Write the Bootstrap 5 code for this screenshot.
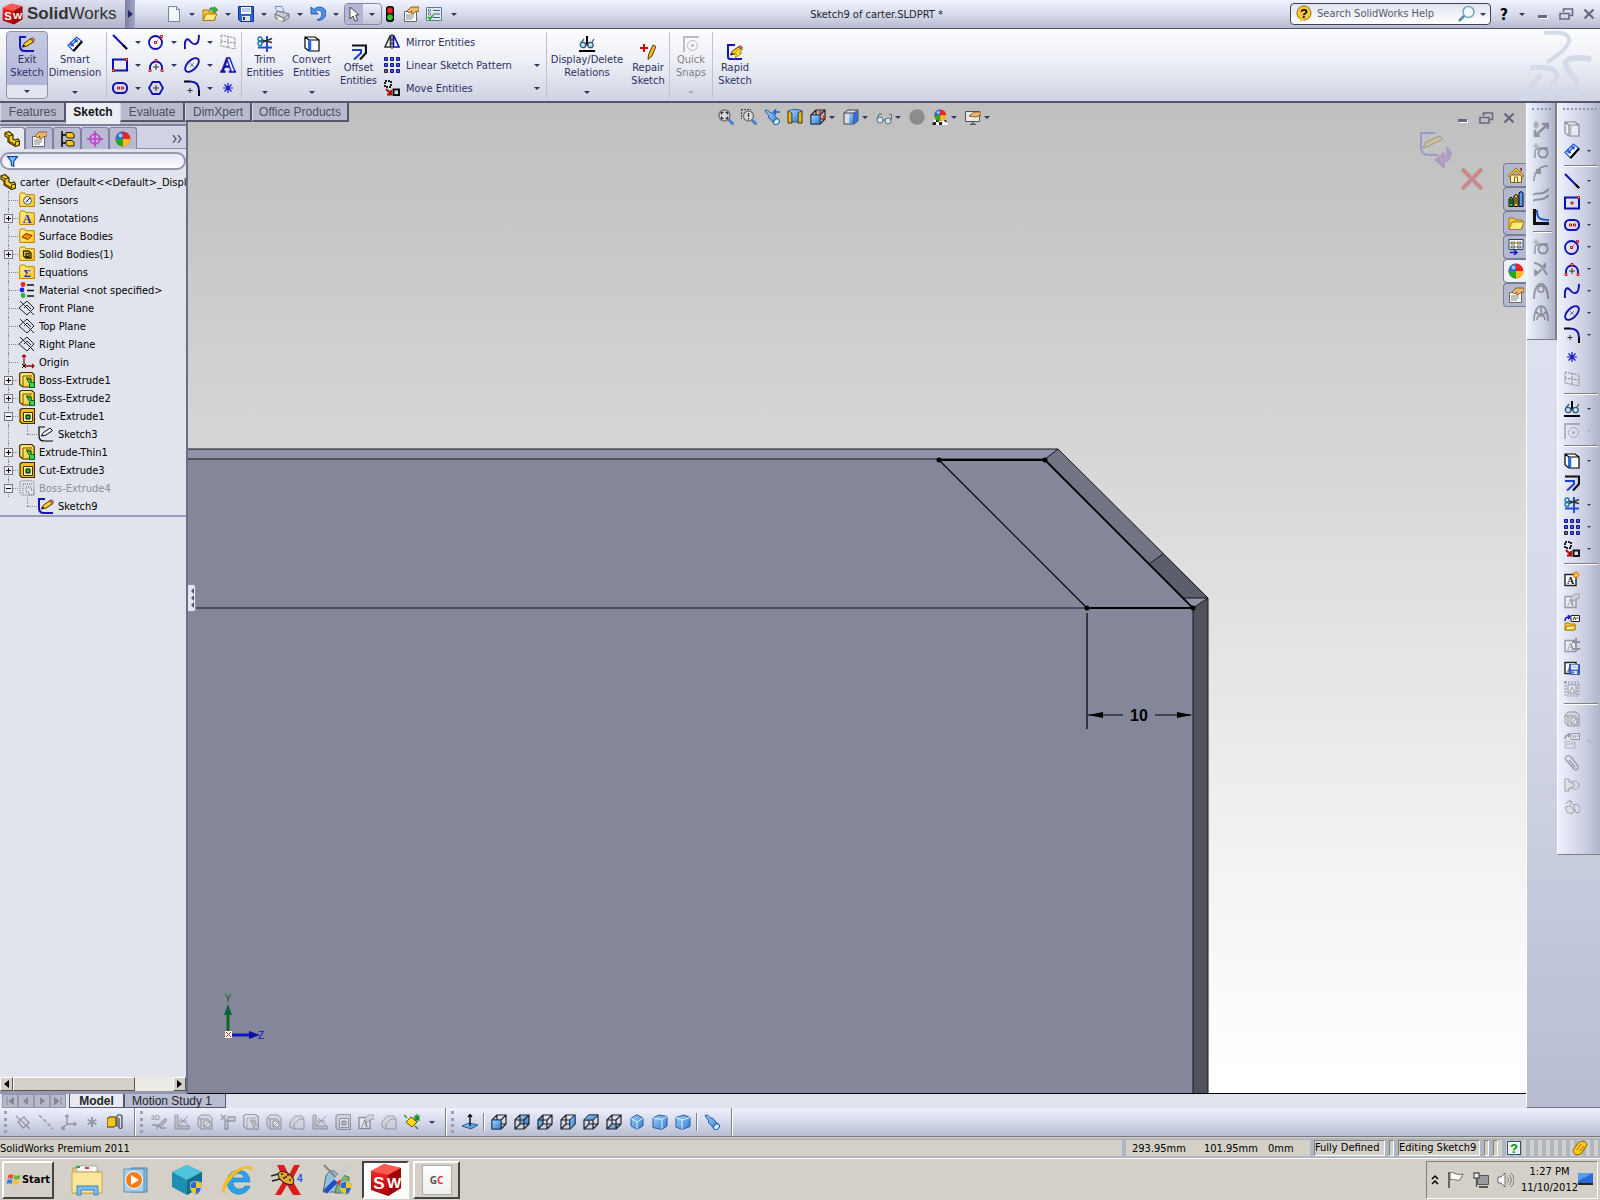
<!DOCTYPE html>
<html lang="en">
<head>
<meta charset="utf-8">
<meta name="viewport" content="width=device-width, initial-scale=1">
<title>SolidWorks - Sketch9 of carter.SLDPRT</title>
<link href="https://cdn.jsdelivr.net/npm/bootstrap@5.3.0/dist/css/bootstrap.min.css" rel="stylesheet">
<style>
:root{--ui:"DejaVu Sans Condensed","DejaVu Sans","Noto Sans",sans-serif;--ar:"Liberation Sans",Arial,sans-serif;--edge:#53566e}
body{font:11px/13px var(--ui);color:#000;background:#d4d0c8;height:100vh;overflow:hidden}
.btn.t{font:inherit;color:inherit;padding:0;border:0;border-radius:0;display:inline-flex;align-items:center;justify-content:center;flex:none;line-height:13px}
svg{display:block;flex:none}
.ic{width:16px;height:16px}
.w18{width:18px;height:20px}.w23{width:23px;height:20px}
.cr{display:block;border:3px solid transparent;border-top-color:#33365c;border-bottom:0;width:0;height:0}
.cr.dim{border-top-color:#aaa}
.off svg{filter:grayscale(1);opacity:.38}
.titlebar{height:29px;background:linear-gradient(#f0f3ff,#d9dcec 50%,#b7bbd0);border-bottom:1px solid var(--edge)}
.logo{width:125px;height:28px;background:linear-gradient(#dcdfee,#b3b6cb);font:17px/28px var(--ar);color:#333;padding-left:2px}
.flyout{width:10px;height:28px;background:linear-gradient(90deg,#797c9e,#a5a8c5)}
.quick{margin-left:30px}
.ptr{border:4px solid transparent;border-left:5px solid #23266a;border-right:0}
.picked{border:1px solid #85889e;border-radius:4px;height:22px;overflow:hidden;margin:0 -1px}
.picked .on{background:#b3b6d3}
.findbox{width:201px;height:22px;border:1px solid #3f4354;border-radius:4px;background:linear-gradient(#e0e4f0,#fff)}
.findbox input,.filterbox input{border:0;background:none;outline:0;min-width:0;font:11px/14px var(--ui);padding:0}
.findbox input::placeholder{color:#555a6c;opacity:1}
.doctitle{color:#1d1f30}
.qm{color:#6d7188;font-size:16px!important}
.ribbon{height:74px;background:linear-gradient(#fcfdff,#edeff6 45%,#d0d3e2);border-bottom:2px solid var(--edge);color:#2c2f66;padding-left:6px}
.btn.big{flex-direction:column;justify-content:flex-start;height:68px;padding-top:5px}
.btn.big span{display:block;text-align:center;white-space:nowrap;margin-top:1px}
.btn.big .cr{margin-top:auto;margin-bottom:5px}
.btn.big.low{padding-top:13px}
.btn.held{background:linear-gradient(#c7cae2,#b2b6d8 80%,#e2e4ee 81%);border:1px solid #8f92ac;border-radius:4px;padding-top:4px}
.vs{width:1px;height:66px;background:#bfc2d0;flex:none}
.gr{height:23px}
.wide-list{width:164px;padding-left:2px}
.wide-list .btn{gap:6px}
.cmdtabs{font:12px/18px var(--ar);height:19px;z-index:2}
.cmdtabs a{color:#4c4e5c;text-decoration:none;background:#b9bbcd;border:1px solid var(--edge);border-width:0 2px 2px 0;height:19px;text-align:center;border-left:1px solid #d6d8e4}
.cmdtabs a.cur{background:#eceef5;color:#111;font-weight:bold;border:0;height:21px}
.side{width:188px;background:#e1e4ed;border-right:2px solid #6b6e86;position:relative}
.sidegap{height:21px;background:#c0c0c4}
.sidetabs{background:#cfd3e4;height:25px;border-top:2px solid #7b7f9b;padding-top:1px;border-bottom:1px solid #8b8fa8;font-size:20px;color:#666a7c}
.sidetabs .btn{width:28px;height:22px;background:#b8bbd3;border:1px solid #7e829e;border-bottom:0;border-radius:3px 3px 0 0}
.sidetabs .btn.cur{background:#e6e9f1;width:25px;border-left:0}
.filterbox{height:18px;border:2px solid #9598a8;border-radius:9px;background:linear-gradient(#e2e5f3,#fff);margin-top:3px}
.tree{list-style:none;margin:3px 0 0;padding:0;border-bottom:2px solid #9a9dbb;white-space:nowrap}
.tree li{height:18px;display:flex;align-items:center;padding-left:19px;position:relative}
.tree li.root{padding-left:0}
.tree .ic{margin-right:4px}
.tree li:not(.root)::before{content:"";position:absolute;left:8px;top:0;bottom:0;border-left:1px dotted #888}
.tree li:not(.root)::after{content:"";position:absolute;left:9px;width:9px;top:9px;border-top:1px dotted #888}
.tree li.kid{padding-left:38px}
.tree li.kid::after{left:27px;width:10px}
.tree li.kid b{position:absolute;left:27px;top:0;height:9px;border-left:1px dotted #888}
.tree li.end::before{display:none}
.ghosted{color:#8c8e98}
.xp{position:absolute;left:4px;top:5px;width:9px;height:9px;border:1px solid #777;background:#eef0f6;z-index:1;padding:0}
.xp::before{content:"";position:absolute;left:1px;right:1px;top:3px;height:1px;background:#000}
.xp.plus::after{content:"";position:absolute;top:1px;bottom:1px;left:3px;width:1px;background:#000}
.hscroll{height:14px;background:#eceae5}
.bev,.btn.t.bev{background:#d4d0c8;border:1px solid;border-color:#fff #555 #555 #fff;height:14px;width:13px}
.bev.thumb{width:122px}
.sidefoot{height:3px;background:#9497b0}
.view{background:linear-gradient(#bfbfbf,#d8d8d8 38%,#ececec 66%,#fff 98%);position:relative;min-width:0;border-bottom:1px solid #000;overflow:hidden}
.model{position:absolute;inset:0;width:100%;height:100%}
.heads{position:absolute;top:4px;left:0;right:6px}
.heads .cw{width:10px;padding-right:4px}
.winbtns{position:absolute;top:5px;right:6px}
.confirm{position:absolute;top:26px;right:42px;opacity:.38}
.btn.t.grab{position:absolute;left:0;top:481px;width:8px;height:28px;background:#e4e6ef;border:1px solid #8d90a6;border-left:0;border-radius:0 3px 3px 0}
.panes{position:absolute;right:-1px;top:60px;width:24px}
.panes .btn{width:24px;height:24px;background:#b4b8cd;border:1px solid #777c98;border-right:0;border-radius:4px 0 0 4px}
.panes .btn.cur{background:#eef0f6}
.dock{width:74px;background:linear-gradient(#e2e6f4,#d5d9ea 55%,#b8bcd2);border-left:1px solid #fff;border-bottom:1px solid #777}
.vbar{background:linear-gradient(90deg,#eef1fd,#c9cde0 65%,#aeb2cb);border:2px solid #808080;border-width:0 2px 1px 0;padding-top:15px;position:relative;flex:none}
.vbar.wide{width:44px;height:752px;border-left:1px solid #fff;border-right:0}
.vbar.thin{width:30px;height:237px}
.vbar::before{content:"";position:absolute;top:5px;left:5px;right:4px;border-top:2px dotted #9195ad}
.vr2{height:22px;display:flex;align-items:center;padding-left:6px}
.vr2 .cw{width:14px;padding-left:4px}
.vr2 .cr{border-width:2px 2px 0}
.hr2{height:2px;margin:3px 3px 3px 6px;background:#808080;border-bottom:1px solid #fff}
.sheets{height:14px;background:#e1e4ed;font:12px/13px var(--ar)}
.sheets .btn{font:12px/12px var(--ar);height:14px;padding:0;border:1px solid #555a70;border-top:0;border-radius:0}
.sheets .nv{width:16px;background:#b7b9ca;border:1px solid #9497ac}
.sheets .first{width:55px;background:#e8eaf2}
.sheets .second{width:102px;background:#b9bbcf;text-align:left;padding-left:7px}
.nvs{width:69px;padding-left:2px}
.hbar{height:29px;background:linear-gradient(#eef1fd,#cfd3e6 60%,#b9bdd2);border-bottom:1px solid #777}
.dots{width:3px;height:22px;border-left:3px dotted #9b9eb4;flex:none}
.s1{width:2px;background:#808080;border-right:1px solid #fff;flex:none}
.s1.short{height:18px;margin:0 2px}
.status{height:20px;border-top:2px solid #b0b6c0;border-bottom:2px solid #b0b6c0;margin-top:1px}
.status span{white-space:nowrap}
.bl{background:#adb7c3}
.cell{border:1px solid;border-color:#808080 #fff #fff #808080;background:#d4d0c8;height:16px;flex:none;width:5px;line-height:14px}
.stripes{background:repeating-linear-gradient(90deg,#d4d0c8 0 4px,#adb7c3 4px 8px);width:102px;padding:0 12px 0 9px}
.task{border-top:1px solid #fff;height:42px;padding:2px}
.btn.t.raised{background:#d4d0c8;border:2px solid;border-color:#fff #444 #444 #fff;width:47px}
.btn.t.raised.start{width:52px}
.btn.t.sunk{background:#fff;border:2px solid;border-color:#444 #fff #fff #444;width:47px}
.task .btn{height:38px}
.task .btn.la{width:34px;margin-left:16px}
.big32{width:32px;height:32px}
.tray{border:1px solid;border-color:#808080 #fff #fff #808080;width:172px;height:38px}
.gc{width:30px;height:30px;background:linear-gradient(#fff,#eee);border:1px solid #aaa;font:bold 10px/28px "Open Sans",sans-serif;color:#555}
.clock{line-height:16px}
</style>
<script src="https://cdn.jsdelivr.net/npm/bootstrap@5.3.0/dist/js/bootstrap.bundle.min.js"></script>
</head>
<body class="d-flex flex-column">
<svg width="0" height="0" class="position-absolute" aria-hidden="true">
<defs>
<linearGradient id="gy" x1="0" y1="0" x2="1" y2="1"><stop offset="0" stop-color="#fff48a"/><stop offset="1" stop-color="#fcc81c"/></linearGradient>
<linearGradient id="gb" x1="0" y1="0" x2="1" y2="1"><stop offset="0" stop-color="#a8d4ff"/><stop offset="1" stop-color="#2f7ad0"/></linearGradient>
<linearGradient id="gr" x1="0" y1="0" x2="0" y2="1"><stop offset="0" stop-color="#f33"/><stop offset="1" stop-color="#a00"/></linearGradient>
<g id="pen"><path d="M3.500 11l2-4L12 2.500l3 3L8 10z" fill="#ffd024" stroke="#4a3000"/><path d="M11.500 3l2-1.500 2.300 2-1.800 2.200z" fill="#d66" stroke="#633" stroke-width=".6"/><path d="M3.500 11l1-2.500 1.800 1.500z" fill="#111"/></g>
<symbol id="new" viewBox="0 0 16 16"><path d="M2.500.5h8l3 3v12h-11z" fill="#f2f7fa" stroke="#6f8a94"/><path d="M10.500.5v3h3" fill="#cfe0e6" stroke="#6f8a94"/></symbol>
<symbol id="open" viewBox="0 0 16 16"><path d="M1 14V4h5l1 2h6v8z" fill="#f6c945" stroke="#a87800"/><path d="M1 14.500L4 8h11l-3 6.500z" fill="#ffe88a" stroke="#a87800"/><path d="M7 4c1-3 4-3 5-1V.5L16 4l-4 3V5c-2-1-3-1-5-1" fill="#3db53d" stroke="#0b6a0b" stroke-width=".5"/></symbol>
<symbol id="save" viewBox="0 0 16 16"><path d="M.5.5h15v15h-13l-2-2z" fill="#2b62cf" stroke="#12318a"/><path d="M3 1h10v7H3z" fill="#fff"/><path d="M4 3h8M4 5h8" stroke="#7a9bd8"/><path d="M4 10h8v5H4z" fill="#dce4f4"/><path d="M5 11h2v3H5z" fill="#12318a"/></symbol>
<symbol id="print" viewBox="0 0 16 16"><path d="M3 6L1 .5h7L10 6z" fill="#d8ebff" stroke="#6a7c96" stroke-width=".8"/><path d="M1 8l3-3 11 3v4l-6 3.500L1 12z" fill="#c9ccd4" stroke="#555a66" stroke-width=".8"/><path d="M1 8l9 4 5-4M10 12v3" fill="none" stroke="#555a66" stroke-width=".8"/><path d="M4 11l5 2v2l-5-1z" fill="#f6f6c8"/></symbol>
<symbol id="undo" viewBox="0 0 16 16"><path d="M1 1v7h7L5.500 5.500C8 3 12 4 12 8c0 3-2 5-5 6 5 1 9-2 9-7 0-6-8-8-12-3.500z" fill="#4d92e6" stroke="#174a9c" stroke-width=".8"/></symbol>
<symbol id="arrow" viewBox="0 0 16 16"><path d="M4 1v12l3-3 2 5 2.500-1-2-5H13z" fill="#fff" stroke="#444"/></symbol>
<symbol id="light" viewBox="0 0 16 16"><rect x="4.500" y=".5" width="7" height="15" rx="2" fill="#222" stroke="#000"/><circle cx="8" cy="4.500" r="2.700" fill="#f22"/><circle cx="8" cy="11.300" r="2.700" fill="#3c3"/></symbol>
<symbol id="props" viewBox="0 0 16 16"><path d="M1.500 5.500h12v10h-12z" fill="#fafafa" stroke="#666"/><path d="M3 9h8M3 11h8M3 13h6" stroke="#888"/><path d="M4 5l4-4 8 0v4l-4 1-2 2-2-1 1-2-3 2z" fill="#eeb56c" stroke="#7a4a10" stroke-width=".8"/></symbol>
<symbol id="opts" viewBox="0 0 16 16"><path d="M.5 1.500h15v13H.5z" fill="#dfeaf2" stroke="#5a7c90"/><path d="M7 4.500h7M7 8h7M7 11.500h7" stroke="#557" stroke-width="1.200"/><path d="M2.500 3.500h2v2h-2zM2.500 7h2v2h-2z" fill="#fff" stroke="#557" stroke-width=".7"/><path d="M2 11l2 2 3-4" stroke="#0a0" fill="none" stroke-width="1.600"/></symbol>
<symbol id="sk" viewBox="0 0 16 16"><path d="M7 1H1v9c0 3 2 5 5 5h9" fill="none" stroke="#1414b8" stroke-width="2"/><use href="#pen"/></symbol>
<symbol id="skb" viewBox="0 0 16 16"><path d="M7 1H1v9c0 3 2 5 5 5h9" fill="none" stroke="#000" stroke-width="1.200"/><path d="M3.500 10l2-3.500L12 2l2.500 2.500L8 9z" fill="#fff" stroke="#000"/></symbol>
<symbol id="dim" viewBox="0 0 16 16"><path d="M1 9.500L9.500 1l5.500 4.500L6.500 15z" fill="#fff" stroke="#1d4fd8" stroke-width="1.200"/><path d="M4 9.500L10 4M4 6.500v3h3M7.500 4H10v2.500" fill="none" stroke="#1d4fd8" stroke-width="1.400"/><path d="M6.500 15L15 5.500" stroke="#000" stroke-width="2.200"/></symbol>
<symbol id="line" viewBox="0 0 16 16"><path d="M1 1l14 14" stroke="#1010b0" stroke-width="2"/><path d="M11 11l4 4" stroke="#000" stroke-width="2"/></symbol>
<symbol id="rect" viewBox="0 0 16 16"><path d="M1 2.500h14v11H1z" fill="none" stroke="#1010b0" stroke-width="2"/><path d="M13.500 1.500h2v2h-2zM.5 12.500h2v2h-2z" fill="#fff" stroke="#c00"/></symbol>
<symbol id="rectc" viewBox="0 0 16 16"><path d="M1 2.500h14v11H1z" fill="none" stroke="#1010b0" stroke-width="2"/><path d="M7 7h2v2H7zM13.500 1.500h2v2h-2z" fill="#fff" stroke="#c00"/></symbol>
<symbol id="slot" viewBox="0 0 16 16"><rect x="1" y="3" width="14" height="10" rx="4.500" fill="none" stroke="#1010b0" stroke-width="2"/><path d="M5.500 7h2v2h-2zM9.500 7h2v2h-2z" fill="#fff" stroke="#c00"/></symbol>
<symbol id="circ" viewBox="0 0 16 16"><circle cx="7.500" cy="8.500" r="6.500" fill="none" stroke="#1010b0" stroke-width="1.800"/><path d="M8 8l5-5" stroke="#800" stroke-dasharray="1 1"/><path d="M6.500 7.500h2v2h-2zM12.500 1.500h2v2h-2z" fill="#fff" stroke="#c00"/></symbol>
<symbol id="arc" viewBox="0 0 16 16"><path d="M2 12C1 2 15 2 14 12" fill="none" stroke="#1010b0" stroke-width="1.800"/><path d="M8 7v6M5 10h6" stroke="#333"/><path d="M7 2.500h2v2H7zM1 12.500h2v2H1zM13 12.500h2v2h-2z" fill="#fff" stroke="#c00"/></symbol>
<symbol id="poly" viewBox="0 0 16 16"><path d="M4.500 2h7L15 8l-3.500 6h-7L1 8z" fill="none" stroke="#1010b0" stroke-width="1.800"/><path d="M8 5v6M5 8h6" stroke="#333"/></symbol>
<symbol id="spl" viewBox="0 0 16 16"><path d="M1 15C0 6 3 3 6 7s9 6 9-6" fill="none" stroke="#1010b0" stroke-width="1.900"/></symbol>
<symbol id="ell" viewBox="0 0 16 16"><ellipse cx="8" cy="8" rx="8.500" ry="4.600" transform="rotate(-45 8 8)" fill="none" stroke="#1010b0" stroke-width="1.800"/><path d="M6 6l4 4M10 6l-4 4" stroke="#555" stroke-dasharray="1 .6"/></symbol>
<symbol id="fil" viewBox="0 0 16 16"><path d="M0 1.500h6" stroke="#000" stroke-width="2"/><path d="M6 1.500c6 0 9 3 9 9" fill="none" stroke="#1010b0" stroke-width="2"/><path d="M15 10v6" stroke="#000" stroke-width="2"/><path d="M6 8v5M3.500 10.500h5" stroke="#333"/></symbol>
<symbol id="txt" viewBox="0 0 16 16"><text x="8" y="15" text-anchor="middle" font-family="Liberation Serif" font-weight="bold" font-size="21" fill="#fff" stroke="#1010b0" stroke-width="1.300">A</text></symbol>
<symbol id="pt" viewBox="0 0 16 16"><path d="M8 3v10M3 8h10M4.500 4.500l7 7M11.500 4.500l-7 7" stroke="#1414c8" stroke-width="1.200"/></symbol>
<symbol id="pl3" viewBox="0 0 16 16"><path d="M1 1l14 3v11l-14-3zM8 2v12M1 7l14 2" fill="none" stroke="#888" stroke-dasharray="2 1"/></symbol>
<symbol id="trim" viewBox="0 0 16 16"><path d="M10 0v16M1 11.500h14" stroke="#1d4fd8" stroke-width="2"/><path d="M5 4l10 2.500M5 6.500l10-4" stroke="#333" stroke-width="1.500"/><circle cx="3" cy="3" r="2" fill="none" stroke="#17a" stroke-width="1.400"/><circle cx="3" cy="7.500" r="2" fill="none" stroke="#17a" stroke-width="1.400"/></symbol>
<symbol id="conv" viewBox="0 0 16 16"><path d="M1 1h10l4 3v11H5l-4-3zM5 4h10M5 4v11M1 1l4 3" fill="#fff" stroke="#000" stroke-width="1.200"/><path d="M6 4v11" stroke="#1c6df0" stroke-width="2.500"/></symbol>
<symbol id="offs" viewBox="0 0 16 16"><path d="M1 1.500h14V9L9 15.500" fill="none" stroke="#111" stroke-width="2.200"/><path d="M1 6h9v3l-7 6.500" fill="none" stroke="#1d3fd0" stroke-width="2"/></symbol>
<symbol id="mir" viewBox="0 0 16 16"><path d="M6.500 1v12H1z" fill="#fff" stroke="#333" stroke-width="1.600"/><path d="M9.500 1v12H15z" fill="#fff" stroke="#1010b0" stroke-width="1.600"/><path d="M8 0v16" stroke="#000" stroke-dasharray="3 1"/></symbol>
<symbol id="pat" viewBox="0 0 16 16"><g fill="#4b5df0" stroke="#101080"><path d="M.5.500h3v3h-3zM6.500.500h3v3h-3zM12.500.500h3v3h-3zM.5 6.500h3v3h-3zM6.500 6.500h3v3h-3zM12.500 6.500h3v3h-3zM6.500 12.500h3v3h-3zM12.500 12.500h3v3h-3z"/><path d="M.5 12.500h3v3h-3z" fill="#777" stroke="#222"/></g></symbol>
<symbol id="move" viewBox="0 0 16 16"><path d="M1 1h6v6H1z" fill="none" stroke="#222" stroke-width="2" stroke-dasharray="2 1"/><path d="M2 9l5 5M7 10v4.500H3" stroke="#a00" fill="none" stroke-width="1.800"/><path d="M9.500 9.500h5.500v5.500H9.500z" fill="#ddd" stroke="#111" stroke-width="2"/></symbol>
<symbol id="rel" viewBox="0 0 16 16"><path d="M8 0v9M0 15h16" stroke="#000" stroke-width="2"/><circle cx="4" cy="9" r="2.700" fill="#bfe4fa" stroke="#3a5a74" stroke-width="1.300"/><circle cx="11.500" cy="9" r="2.700" fill="#bfe4fa" stroke="#3a5a74" stroke-width="1.300"/><path d="M2 7l3-4M13 6l2-3M7 9h2" stroke="#3a5a74" stroke-width="1.300"/></symbol>
<symbol id="rep" viewBox="0 0 16 16"><path d="M4 0v8M0 4h8" stroke="#d00" stroke-width="2"/><path d="M8 15.500l.5-5L13 1l3 1.500-4 9.500z" fill="#f5b820" stroke="#5a3a00"/></symbol>
<symbol id="snap" viewBox="0 0 16 16"><path d="M1 16V1h15" fill="none" stroke="#555" stroke-width="1.800"/><circle cx="9.500" cy="9.500" r="5" fill="none" stroke="#555"/><circle cx="9.500" cy="9.500" r="1.500" fill="#555"/></symbol>
<symbol id="rapid" viewBox="0 0 16 16"><path d="M8 1H1v12c0 1 1 2 2 2h12" fill="none" stroke="#1414b8" stroke-width="2"/><use href="#pen"/><path d="M12 5l-5 5h3l-3 5 8-6h-3l3-4z" fill="#ffe92e" stroke="#a60" stroke-width=".7"/></symbol>
<symbol id="part" viewBox="0 0 16 16"><path d="M1 2l4-1.500L9 4v4l2 1 3-1 1.500 2v4L11.500 15.500 4 11V7L1 5z" fill="#f8cf1e" stroke="#3a2c00" stroke-width="1.200"/><path d="M1 2l4 3 4-1M5 5v5l6.500 4v-3M11.500 11l4-1" fill="none" stroke="#3a2c00"/></symbol>
<symbol id="ftree" viewBox="0 0 16 16"><path d="M3 0v16M3 4h4M3 12h4" stroke="#000" stroke-width="1.500"/><path d="M7 1.500h6l2 1.500v4H9L7 5.500zM7 9.500h6l2 1.500v4H9l-2-1.500z" fill="#f2c81c" stroke="#2a2000"/></symbol>
<symbol id="target" viewBox="0 0 16 16"><circle cx="8" cy="8" r="5" fill="none" stroke="#c63ad0" stroke-width="1.600"/><path d="M8 0v16M0 8h16" stroke="#c63ad0" stroke-width="1.600"/></symbol>
<symbol id="ball" viewBox="0 0 16 16"><circle cx="8" cy="8" r="7.500" fill="#e22"/><path d="M8 .5A7.500 7.500 0 0 0 .5 8L8 8z" fill="#2a6ae0"/><path d="M.5 8A7.500 7.500 0 0 0 8 15.500L8 8z" fill="#2a2"/><path d="M8 15.500A7.500 7.500 0 0 0 15.500 8L8 8z" fill="#fb2"/><circle cx="5.500" cy="4.500" r="2" fill="#fff" opacity=".6"/></symbol>
<symbol id="funnel" viewBox="0 0 16 16"><path d="M2 2h12L9.500 8v6l-3-1.500V8z" fill="#7cc4ff" stroke="#0b4aa8" stroke-width="1.500"/></symbol>
<symbol id="fold" viewBox="0 0 16 16"><path d="M.7 14.500V2.500l1-1.500h4l1 1.700h8.600v11.800z" fill="url(#gy)" stroke="#c08000"/></symbol>
<symbol id="f1" viewBox="0 0 16 16"><use href="#fold"/><circle cx="8.500" cy="8.500" r="4" fill="#eef" stroke="#555"/><path d="M7 10l4-4" stroke="#000"/></symbol>
<symbol id="f2" viewBox="0 0 16 16"><use href="#fold"/><text x="8" y="13" text-anchor="middle" font-family="Liberation Serif" font-weight="bold" font-size="12" fill="#1030d0">A</text></symbol>
<symbol id="f3" viewBox="0 0 16 16"><use href="#fold"/><path d="M3 9l4-3.500 6 2-4 4z" fill="#f80" stroke="#630"/></symbol>
<symbol id="f4" viewBox="0 0 16 16"><use href="#fold"/><path d="M4.500 5h5l2.500 2v5H7L4.500 10zM7 7.500h3v3H7z" fill="none" stroke="#332600" stroke-width="1.300"/></symbol>
<symbol id="f5" viewBox="0 0 16 16"><use href="#fold"/><text x="8" y="13" text-anchor="middle" font-family="Liberation Serif" font-weight="bold" font-size="11" fill="#1030d0">Σ</text></symbol>
<symbol id="mat" viewBox="0 0 16 16"><circle cx="4" cy="2.500" r="2.400" fill="#e22"/><circle cx="3" cy="8" r="2.400" fill="#22d"/><circle cx="4" cy="13.500" r="2.400" fill="#2b3"/><path d="M8 3h7M8 8.500h7M8 14h7" stroke="#111" stroke-width="1.600"/></symbol>
<symbol id="plane" viewBox="0 0 16 16"><path d="M0 8l8-7 7 7-7 7zM1 1l14 14M5 8l3-3 4 4" fill="none" stroke="#222"/></symbol>
<symbol id="orig" viewBox="0 0 16 16"><path d="M5 11V1M3 3l2-2 2 2M6 12h9M13 10l2 2-2 2" fill="none" stroke="#a01010" stroke-width="1.300"/><path d="M3 10l4 4M7 10l-4 4" stroke="#000"/></symbol>
<symbol id="boss" viewBox="0 0 16 16"><path d="M.7 1.500l2-1h10l2.500 2v12.500H4l-3.300-2.500z" fill="url(#gy)" stroke="#3a2c00" stroke-width="1.200"/><path d="M4 4h9M4 4v10M7 6h5v6" stroke="#6a5000" fill="none"/><path d="M7.500 6.500l4.500 1v3h3.500v5h-5v-4z" fill="#3fd04f" stroke="#052"/></symbol>
<symbol id="cut" viewBox="0 0 16 16"><path d="M1 2l2-1.500h12.500v15H3l-2-2z" fill="#f9bc14" stroke="#3a2c00" stroke-width="1.200"/><path d="M4.500 4.500h9v9h-9z" fill="#fff3a0" stroke="#3a2c00"/><path d="M7 7h4v4H7z" fill="#2b3" stroke="#000"/></symbol>
<symbol id="ghost" viewBox="0 0 16 16"><path d="M1 2l2-1.500h9l3 2v12.500H4l-3-2zM4 4h9M4 4v10M7 7h5v3h3v5h-5v-3H7z" fill="none" stroke="#888" stroke-dasharray="1 1" stroke-width="1.300"/></symbol>
<symbol id="zoomf" viewBox="0 0 16 16"><path d="M10 10l5.500 5.500" stroke="#4a80c8" stroke-width="3"/><circle cx="6.500" cy="6.500" r="5.500" fill="#dadde2" stroke="#777" stroke-width="1.500"/><path d="M3.500 5.500v-2h2M7.500 3.500h2v2M9.500 7.500v2h-2M5.500 9.500h-2v-2" fill="none" stroke="#333" stroke-width="1.400"/></symbol>
<symbol id="zooma" viewBox="0 0 16 16"><path d="M0 .5h10M.5 0v10" stroke="#444" stroke-dasharray="2 1"/><path d="M10 10l5.500 5.500" stroke="#4a80c8" stroke-width="3"/><circle cx="7.500" cy="7" r="5" fill="#dadde2" stroke="#777" stroke-width="1.500"/><path d="M7.500 4v4M7.500 9v1.500" stroke="#333" stroke-width="1.400"/></symbol>
<symbol id="scope" viewBox="0 0 16 16"><path d="M1 1.500L3.500 1l3 3 2 0 6.500 7.500-4 4-6.500-7V6.500z" fill="url(#gb)" stroke="#1a5a9c"/><ellipse cx="12.500" cy="12.800" rx="3.200" ry="2.400" transform="rotate(-45 12.500 12.800)" fill="#d4f0ff" stroke="#1a5a9c"/></symbol>
<symbol id="prev" viewBox="0 0 16 16"><use href="#scope"/><path d="M16 3h-6M12 .5L9.500 3 12 5.500" stroke="#1d5fd8" fill="none" stroke-width="1.500"/></symbol>
<symbol id="sect" viewBox="0 0 16 16"><path d="M1 2h4v12H1zM11 2h4v12h-4z" fill="#e6b820" stroke="#443300"/><path d="M1 2c3-2 11-2 14 0l-4 2v9H5V4z" fill="url(#gb)" stroke="#1a4a8c" stroke-width=".8"/></symbol>
<g id="wire" fill="none" stroke="#222" stroke-width="1.200"><path d="M1 6h9v9H1zM6 1h9v9H6zM1 6l5-5M10 6l5-5M1 15l5-5M10 15l5-5"/></g>
<symbol id="c1" viewBox="0 0 16 16"><use href="#wire"/><path d="M1 6h9v9H1z" fill="url(#gb)" stroke="#246"/></symbol>
<symbol id="c2" viewBox="0 0 16 16"><path d="M6 1h9v9H6z" fill="url(#gb)"/><use href="#wire"/></symbol>
<symbol id="c3" viewBox="0 0 16 16"><path d="M1 6l5-5v9l-5 5z" fill="url(#gb)"/><use href="#wire"/></symbol>
<symbol id="c4" viewBox="0 0 16 16"><use href="#wire"/><path d="M10 6l5-5v9l-5 5z" fill="url(#gb)" stroke="#246"/></symbol>
<symbol id="c5" viewBox="0 0 16 16"><use href="#wire"/><path d="M1 6l5-5h9l-5 5z" fill="url(#gb)" stroke="#246"/></symbol>
<symbol id="c6" viewBox="0 0 16 16"><path d="M1 15l5-5h9l-5 5z" fill="url(#gb)"/><use href="#wire"/></symbol>
<symbol id="c7" viewBox="0 0 16 16"><path d="M8 .7l6 3.500v7.600l-6 3.500-6-3.500V4.200z" fill="url(#gb)" stroke="#235a9c"/><path d="M2 4.200l6 3.600 6-3.600M8 7.800v7.500" fill="none" stroke="#dff" stroke-width=".9"/></symbol>
<symbol id="c8" viewBox="0 0 16 16"><path d="M1 4l6-3 8 1.500v9.500l-5 3.500-9-2z" fill="url(#gb)" stroke="#235a9c"/><path d="M1 4l9 1.500 5-3M10 5.500v10" fill="none" stroke="#dff" stroke-width=".9"/></symbol>
<symbol id="c9" viewBox="0 0 16 16"><path d="M1 3.500l8-2.500 6 2.500v9L7 15.500 1 13z" fill="url(#gb)" stroke="#235a9c"/><path d="M1 3.500L7 6l8-2.500M7 6v9.500" fill="none" stroke="#dff" stroke-width=".9"/></symbol>
<symbol id="co" viewBox="0 0 16 16"><use href="#c1"/><path d="M10 1v4M8 3h4M12 8h4M14 6v4" stroke="#d22"/></symbol>
<symbol id="c10" viewBox="0 0 16 16"><path d="M1 4l4-3h10v11l-4 3H1z" fill="#d9dce4" stroke="#444"/><path d="M6 4h5v11H6z" fill="url(#gb)"/><path d="M1 4h10v11M11 4l4-3" fill="none" stroke="#444"/><path d="M11 4l4-3v11l-4 3z" fill="#3a6ad8"/></symbol>
<symbol id="glas" viewBox="0 0 16 16"><circle cx="4" cy="11" r="3" fill="#cfe6f4" stroke="#566b7c"/><circle cx="12" cy="12" r="3" fill="#cfe6f4" stroke="#566b7c"/><path d="M7 11h2M1 10l2-5 3 0M15 11l1-5-3-1" stroke="#566b7c" fill="none"/></symbol>
<symbol id="grey" viewBox="0 0 16 16"><circle cx="8" cy="8" r="7.700" fill="#8c8c8c"/></symbol>
<symbol id="scene" viewBox="0 0 16 16"><path d="M0 16l2-5h12l2 5z" fill="#fff"/><path d="M1 13h3v3H0zM7 13h3v3H7zM12 11h2l1 2h-2zM4 11h3v2H4z" fill="#222"/><g transform="translate(2 0) scale(.78)"><use href="#ball" width="16" height="16"/></g></symbol>
<symbol id="mon" viewBox="0 0 16 16"><path d="M.5 2.500h14v10H.5z" fill="#e8e8ea" stroke="#555"/><path d="M5 15.500h6M8 13v2" stroke="#555" stroke-width="1.500"/><path d="M4 7l5-4h7v3l-5 2z" fill="#eeb56c" stroke="#7a4a10" stroke-width=".8"/></symbol>
<symbol id="home" viewBox="0 0 16 16"><path d="M2.500 8h11v7.500h-11z" fill="#fff0b0" stroke="#8a6010"/><path d="M0 9l8-8 8 8-1.500 1L8 4l-6.500 6z" fill="#f2c030" stroke="#8a6010" stroke-width=".8"/><path d="M12 1h2v4l-2-2z" fill="#b33"/><path d="M6.500 10h3v5.500h-3z" fill="#fff" stroke="#8a6010"/></symbol>
<symbol id="books" viewBox="0 0 16 16"><path d="M1 8l2-2 2 2v7.500H1z" fill="#3b4" stroke="#000"/><path d="M6 5l2-1.500L10 5v10.500H6z" fill="#fc3" stroke="#000"/><path d="M11 2l2-1.500L15 2v13.500h-4z" fill="#59f" stroke="#000"/><path d="M3 8v5M8 6v7" stroke="#000"/></symbol>
<symbol id="fopen" viewBox="0 0 16 16"><path d="M1 14V3h5l1 2h7v9z" fill="#f6c945" stroke="#a87800"/><path d="M1 14.500L4 7h12l-3 7.500z" fill="#ffe88a" stroke="#a87800"/></symbol>
<symbol id="pal" viewBox="0 0 16 16"><path d="M1 .5h14v10H1z" fill="#fff" stroke="#246"/><path d="M3 3h4v2H3zM9 3h4v2H9zM3 7h4v2H3zM9 7h4v2H9z" fill="#fc3" stroke="#246" stroke-width=".7"/><path d="M2 13.500h6M6 11l3 2.500L6 16" stroke="#11c" fill="none" stroke-width="1.500"/></symbol>
<symbol id="blk" viewBox="0 0 16 16"><path d="M1 3.500h11v11H1z" fill="#fff" stroke="#222" stroke-width="1.400"/><text x="6.500" y="12.500" text-anchor="middle" font-family="Liberation Serif" font-weight="bold" font-size="10" fill="#222">A</text></symbol>
<symbol id="b1" viewBox="0 0 16 16"><use href="#blk"/><path d="M12 0v8M8 4h8M9.500 1.500l5 5M14.500 1.500l-5 5" stroke="#f07000" stroke-width="1.200"/><circle cx="12" cy="4" r="1.700" fill="#fd3"/></symbol>
<symbol id="b2" viewBox="0 0 16 16"><use href="#blk"/><path d="M7 4l4-3h5v4l-4 1-3 3z" fill="#bbb" stroke="#444"/></symbol>
<symbol id="b3" viewBox="0 0 16 16"><path d="M1 6c0-3 2-4 4-4M4 0l2 2-2 2" fill="none" stroke="#11c" stroke-width="1.500"/><path d="M7 .5h8.500v6H7z" fill="#fff" stroke="#222"/><path d="M9 5l1.500-3L12 5M12.500 3h2" stroke="#222" fill="none"/><path d="M1 15V8h4l1 1h5v6z" fill="#f6c945" stroke="#a87800"/><path d="M1 15l2-4h9l-2 4z" fill="#ffe88a" stroke="#a87800"/></symbol>
<symbol id="b4" viewBox="0 0 16 16"><use href="#blk"/><path d="M12 1v9M8 5h8M9 12h7" stroke="#222" stroke-width="2"/></symbol>
<symbol id="b5" viewBox="0 0 16 16"><use href="#blk"/><g transform="translate(5 5) scale(.68)"><use href="#save" width="16" height="16"/></g></symbol>
<symbol id="b6" viewBox="0 0 16 16"><rect x="1.500" y="1.500" width="13" height="13" fill="none" stroke="#222" stroke-width="3" stroke-dasharray="1 2"/><path d="M4 4h8v8H4z" fill="#fff" stroke="#222"/><path d="M5.500 11L8 6l2.500 5" fill="none" stroke="#222"/></symbol>
<symbol id="cube" viewBox="0 0 16 16"><path d="M1 4l3-3h8l3 3v11H4l-3-3z" fill="#ccc" stroke="#222"/><path d="M1 4l3 1h8M4 5v10" fill="none" stroke="#222"/><path d="M7 7h6v6H7zM7 13l6-6" fill="#fff" stroke="#222"/></symbol>
<symbol id="clip" viewBox="0 0 16 16"><path d="M4 7l6 7c2 2 5 0 4-3L7 2C4-1 0 2 2 5l8 9M5 5l6 7" fill="none" stroke="#333" stroke-width="1.300"/></symbol>
<symbol id="hook" viewBox="0 0 16 16"><path d="M1 2h4v3h3c3-2 7 0 7 3s-4 6-7 3H5v3H1zM7 6c4-1 4 5 0 4" fill="#ddd" stroke="#333"/></symbol>
<symbol id="gears" viewBox="0 0 16 16"><path d="M2 5c1-3 4-3 6-2M5 1l3 2-2 3M1 8l5-1 4 4-2 4-5-2zM9 6l4-1 3 3v5l-4 1z" fill="#ddd" stroke="#333"/></symbol>
<symbol id="per" viewBox="0 0 16 16"><path d="M1 2l14 13M3 8l6-5 5 6-6 5z" fill="none" stroke="#333" stroke-width="1.300"/></symbol>
<symbol id="axis" viewBox="0 0 16 16"><path d="M1 1l14 14" stroke="#333" stroke-width="1.500" stroke-dasharray="4 2"/></symbol>
<symbol id="csys" viewBox="0 0 16 16"><path d="M6 10V1M4 3l2-2 2 2M6 10h9M13 8l2 2-2 2M6 10l-5 5M1 12v3h3" fill="none" stroke="#333" stroke-width="1.500"/></symbol>
<symbol id="ast" viewBox="0 0 16 16"><path d="M8 3v10M3.500 5.500l9 5M12.500 5.500l-9 5" stroke="#333" stroke-width="2"/></symbol>
<symbol id="mate" viewBox="0 0 16 16"><path d="M0 5l2-2h7v8l-2 2H0z" fill="#f5c518" stroke="#4a3500"/><path d="M10 13V3c0-3 5-3 5 0v10c0 2-3 2-3 0V4" fill="none" stroke="#444" stroke-width="1.200"/></symbol>
<symbol id="td" viewBox="0 0 16 16"><text x="0" y="6" font-family="Liberation Sans" font-weight="bold" font-size="7" fill="#333">3D</text><path d="M1 11h5v4M7 12l7-7 2 1-7 7zM9 14h6" fill="none" stroke="#333" stroke-width="1.300"/></symbol>
<symbol id="corner" viewBox="0 0 16 16"><path d="M1 1h3v11h12v3H1z" fill="#999" stroke="#333"/><path d="M5 11l9-9M6 4l8 7M5 7h8" stroke="#333" fill="none"/></symbol>
<symbol id="xt" viewBox="0 0 16 16"><path d="M1 1l5 5M6 1L1 6" stroke="#333" stroke-width="1.600"/><path d="M5 7h10V3H8v12H5z" fill="#bbb" stroke="#333" stroke-width="1.300"/></symbol>
<symbol id="chm" viewBox="0 0 16 16"><path d="M1 8l5-6h7l2 3v10H5l-4-2z" fill="#ccc" stroke="#333"/><path d="M5 15v-5l5-5h5" fill="none" stroke="#333"/></symbol>
<symbol id="diam" viewBox="0 0 16 16"><path d="M2 8l5-5 6 5-5 5z" fill="#ffd818" stroke="#6a5000"/><path d="M0 1l3 3M11 12l3 3M13 0v8M9 4h7M10.500 1.500l5 5M15.500 1.500l-5 5" stroke="#0a8a1a" stroke-width="1.200"/></symbol>
<symbol id="norm" viewBox="0 0 16 16"><path d="M0 12l7-3 9 2-7 4z" fill="url(#gb)" stroke="#235a9c"/><path d="M8 12V1M6 3l2-2.500L10 3" fill="none" stroke="#000" stroke-width="1.300"/></symbol>
<symbol id="v1" viewBox="0 0 16 16"><path d="M3 0v8M0 4h6M1 1l4 6M5 1L1 7" stroke="#333"/><path d="M3 14L14 4M2 9v6h5M9 3h6v5" fill="none" stroke="#222" stroke-width="2.500"/></symbol>
<symbol id="v2" viewBox="0 0 16 16"><path d="M3 0v6M0 3h6" stroke="#333"/><circle cx="10" cy="10" r="4.500" fill="none" stroke="#222" stroke-width="2"/><path d="M2 15V9c0-3 3-4 6-4h7" fill="none" stroke="#222" stroke-width="1.500"/></symbol>
<symbol id="v3" viewBox="0 0 16 16"><path d="M1 16C1 7 6 1 15 1" fill="none" stroke="#222" stroke-width="1.600"/><path d="M3 4h5v5H3z" fill="#222"/></symbol>
<symbol id="v4" viewBox="0 0 16 16"><path d="M0 8c5-4 8 2 16-6M0 14c5-4 8 2 16-6" fill="none" stroke="#222" stroke-width="2"/></symbol>
<symbol id="v5" viewBox="0 0 16 16"><path d="M1.500 0v14.500H16" fill="none" stroke="#111" stroke-width="3"/><path d="M4 1c0 8 2 10 12 10" fill="none" stroke="#1d4fd8" stroke-width="2"/></symbol>
<symbol id="v6" viewBox="0 0 16 16"><path d="M1 2c6 0 9 5 13 12M2 15c3-5 6-3 6-7" fill="none" stroke="#222" stroke-width="2"/><path d="M9 5l4-4v7zM1 8l5 3-5 3z" fill="#222"/></symbol>
<symbol id="v7" viewBox="0 0 16 16"><path d="M1 16C1-4 15-4 15 16" fill="none" stroke="#222" stroke-width="2"/><circle cx="8" cy="6" r="3" fill="none" stroke="#222" stroke-width="1.500"/></symbol>
<symbol id="v8" viewBox="0 0 16 16"><path d="M1 16C1-4 15-4 15 16M8 1v9M4 15c0-6 8-6 8 0M3 7l5 4 5-4" fill="none" stroke="#222" stroke-width="1.700"/></symbol>
<symbol id="win-" viewBox="0 0 16 16"><path d="M4 10h9v3H4z" fill="#fff"/><path d="M3 9h9v3H3z" fill="#656982"/></symbol>
<symbol id="winr" viewBox="0 0 16 16"><path d="M5.500 6V3h9v6.500h-3" fill="none" stroke="#656982" stroke-width="1.600"/><path d="M2 7.500h9V13H2z" fill="none" stroke="#656982" stroke-width="1.600"/></symbol>
<symbol id="winx" viewBox="0 0 16 16"><path d="M3.500 3.500l9 9M12.500 3.500l-9 9" stroke="#656982" stroke-width="2.200"/></symbol>
<symbol id="sw" viewBox="0 0 32 32"><path d="M14 0l17 4v20L18 32 1 26V7z" fill="url(#gr)"/><path d="M14 0l17 4-13 7L1 7z" fill="#ff5a50"/><path d="M18 11l13-7v20l-13 8z" fill="#9c0808"/><text x="9" y="25" text-anchor="middle" font-family="Liberation Sans" font-weight="bold" font-size="17" fill="#fff">S</text><text x="24" y="24" text-anchor="middle" font-family="Liberation Sans" font-weight="bold" font-size="15" fill="#fff">W</text></symbol>
<symbol id="shield" viewBox="0 0 12 14"><path d="M6 0l6 2c0 6-2 10-6 12C2 12 0 8 0 2z" fill="#2a6ad0" stroke="#eee" stroke-width=".7"/><path d="M6 .5l5.500 2V7H6zM6 7v6.500C3 12 1 10 .6 7z" fill="#fcc722"/></symbol>
</defs>
</svg>

<header class="titlebar d-flex align-items-center">
  <div class="logo d-flex align-items-center gap-1"><svg width="21" height="22" viewBox="0 0 32 32"><use href="#sw"/></svg><span><b>Solid</b>Works</span></div>
  <button class="btn t flyout" aria-label="Show menu"><i class="ptr"></i></button>
  <div class="quick d-flex align-items-center">
    <button class="btn t w18" aria-label="New"><svg class="ic"><use href="#new"/></svg></button><button class="btn t w18" aria-label="New options"><i class="cr"></i></button>
    <button class="btn t w18" aria-label="Open"><svg class="ic"><use href="#open"/></svg></button><button class="btn t w18" aria-label="Open options"><i class="cr"></i></button>
    <button class="btn t w18" aria-label="Save"><svg class="ic"><use href="#save"/></svg></button><button class="btn t w18" aria-label="Save options"><i class="cr"></i></button>
    <button class="btn t w18" aria-label="Print"><svg class="ic"><use href="#print"/></svg></button><button class="btn t w18" aria-label="Print options"><i class="cr"></i></button>
    <button class="btn t w18" aria-label="Undo"><svg class="ic"><use href="#undo"/></svg></button><button class="btn t w18" aria-label="Undo options"><i class="cr"></i></button>
    <div class="picked d-flex"><button class="btn t w18 on" aria-label="Select"><svg class="ic"><use href="#arrow"/></svg></button><button class="btn t w18" aria-label="Select options"><i class="cr"></i></button></div>
    <button class="btn t w18" aria-label="Rebuild"><svg class="ic"><use href="#light"/></svg></button>
    <button class="btn t w23" aria-label="File properties"><svg class="ic"><use href="#props"/></svg></button>
    <button class="btn t w23" aria-label="Options"><svg class="ic"><use href="#opts"/></svg></button><button class="btn t w18" aria-label="More options"><i class="cr"></i></button>
  </div>
  <div class="flex-fill text-center doctitle">Sketch9 of carter.SLDPRT *</div>
  <label class="findbox d-flex align-items-center px-1 gap-1">
    <svg width="18" height="18" viewBox="0 0 18 18"><circle cx="9" cy="8" r="7" fill="#fbc93a" stroke="#9a6a00"/><path d="M5 13v4l4-3z" fill="#fbc93a"/><text x="9" y="12.500" text-anchor="middle" font-family="Liberation Sans" font-weight="bold" font-size="13">?</text></svg>
    <input class="flex-fill" type="search" placeholder="Search SolidWorks Help" aria-label="Search SolidWorks Help">
    <svg width="18" height="18" viewBox="0 0 18 18"><path d="M1 16l6-6" stroke="#5b8cab" stroke-width="2.500"/><circle cx="10.500" cy="7" r="5.500" fill="#f2f8fc" stroke="#7fa4bc" stroke-width="1.500"/></svg><i class="cr"></i>
  </label>
  <button class="btn t ms-1 fw-bold w18 qm" aria-label="Help">?</button><button class="btn t w18" aria-label="Help options"><i class="cr"></i></button>
  <button class="btn t w23" aria-label="Minimize"><svg class="ic"><use href="#win-"/></svg></button>
  <button class="btn t w23" aria-label="Restore"><svg class="ic"><use href="#winr"/></svg></button>
  <button class="btn t w23" aria-label="Close"><svg class="ic"><use href="#winx"/></svg></button>
</header>

<nav class="ribbon d-flex align-items-center">
  <button class="btn t big held" style="width:42px"><svg class="ic"><use href="#sk"/></svg><span>Exit<br>Sketch</span><i class="cr"></i></button>
  <button class="btn t big" style="width:54px"><svg class="ic"><use href="#dim"/></svg><span>Smart<br>Dimension</span><i class="cr"></i></button>
  <div class="vs mx-1"></div>
  <div>
    <div class="gr d-flex align-items-center"><button class="btn t w18" aria-label="Line"><svg class="ic"><use href="#line"/></svg></button><button class="btn t w18" aria-label="Line options"><i class="cr"></i></button><button class="btn t w18" aria-label="Circle"><svg class="ic"><use href="#circ"/></svg></button><button class="btn t w18" aria-label="Circle options"><i class="cr"></i></button><button class="btn t w18" aria-label="Spline"><svg class="ic"><use href="#spl"/></svg></button><button class="btn t w18" aria-label="Spline options"><i class="cr"></i></button><button class="btn t w18" aria-label="Plane"><svg class="ic"><use href="#pl3"/></svg></button></div>
    <div class="gr d-flex align-items-center"><button class="btn t w18" aria-label="Rectangle"><svg class="ic"><use href="#rect"/></svg></button><button class="btn t w18" aria-label="Rectangle options"><i class="cr"></i></button><button class="btn t w18" aria-label="Arc"><svg class="ic"><use href="#arc"/></svg></button><button class="btn t w18" aria-label="Arc options"><i class="cr"></i></button><button class="btn t w18" aria-label="Ellipse"><svg class="ic"><use href="#ell"/></svg></button><button class="btn t w18" aria-label="Ellipse options"><i class="cr"></i></button><button class="btn t w18" aria-label="Text"><svg class="ic"><use href="#txt"/></svg></button></div>
    <div class="gr d-flex align-items-center"><button class="btn t w18" aria-label="Slot"><svg class="ic"><use href="#slot"/></svg></button><button class="btn t w18" aria-label="Slot options"><i class="cr"></i></button><button class="btn t w18" aria-label="Polygon"><svg class="ic"><use href="#poly"/></svg></button><span class="w18"></span><button class="btn t w18" aria-label="Fillet"><svg class="ic"><use href="#fil"/></svg></button><button class="btn t w18" aria-label="Fillet options"><i class="cr"></i></button><button class="btn t w18" aria-label="Point"><svg class="ic"><use href="#pt"/></svg></button></div>
  </div>
  <div class="vs ms-1"></div>
  <button class="btn t big" style="width:46px"><svg class="ic"><use href="#trim"/></svg><span>Trim<br>Entities</span><i class="cr"></i></button>
  <button class="btn t big" style="width:47px"><svg class="ic"><use href="#conv"/></svg><span>Convert<br>Entities</span><i class="cr"></i></button>
  <button class="btn t big low" style="width:47px"><svg class="ic"><use href="#offs"/></svg><span>Offset<br>Entities</span></button>
  <div class="wide-list">
    <div class="gr d-flex align-items-center"><button class="btn t"><svg class="ic"><use href="#mir"/></svg>Mirror Entities</button></div>
    <div class="gr d-flex align-items-center justify-content-between"><button class="btn t"><svg class="ic"><use href="#pat"/></svg>Linear Sketch Pattern</button><button class="btn t w18" aria-label="Pattern options"><i class="cr"></i></button></div>
    <div class="gr d-flex align-items-center justify-content-between"><button class="btn t"><svg class="ic"><use href="#move"/></svg>Move Entities</button><button class="btn t w18" aria-label="Move options"><i class="cr"></i></button></div>
  </div>
  <div class="vs"></div>
  <button class="btn t big" style="width:80px"><svg class="ic"><use href="#rel"/></svg><span>Display/Delete<br>Relations</span><i class="cr"></i></button>
  <button class="btn t big low" style="width:42px"><svg class="ic"><use href="#rep"/></svg><span>Repair<br>Sketch</span></button>
  <div class="vs"></div>
  <button class="btn t big off" style="width:42px"><svg class="ic"><use href="#snap"/></svg><span class="text-black-50">Quick<br>Snaps</span><i class="cr dim"></i></button>
  <div class="vs"></div>
  <button class="btn t big low" style="width:44px"><svg class="ic"><use href="#rapid"/></svg><span>Rapid<br>Sketch</span></button>
  <svg class="ms-auto me-2" width="72" height="70" viewBox="0 0 72 70" fill="none" stroke="#d3dbea" stroke-width="4"><path d="M24 3c32-3 34 10 3 29"/><path d="M10 38c34-4 32 12 14 23-6 4-14 6-22 8l19-25" stroke-width="5"/><path d="M71 29c-28-4-30 3-20 15 10 12 10 19-14 19" stroke-width="6"/></svg>
</nav>

<main class="flex-fill d-flex" style="min-height:0">
  <div class="flex-fill d-flex flex-column" style="min-width:0">
    <div class="flex-fill d-flex position-relative" style="min-height:0">
      <aside class="side d-flex flex-column flex-shrink-0">
        <div class="sidegap"></div>
        <div class="sidetabs d-flex align-items-start">
          <button class="btn t cur" aria-label="Feature tree"><svg class="ic"><use href="#part"/></svg></button><button class="btn t" aria-label="Properties"><svg class="ic"><use href="#props"/></svg></button><button class="btn t" aria-label="Configurations"><svg class="ic"><use href="#ftree"/></svg></button><button class="btn t" aria-label="DimXpert"><svg class="ic"><use href="#target"/></svg></button><button class="btn t" aria-label="Display"><svg class="ic"><use href="#ball"/></svg></button>
          <svg class="ms-auto me-1 mt-2" width="10" height="8"><path d="M1 0l3 4-3 4M6 0l3 4-3 4" fill="none" stroke="#555a70" stroke-width="1.300"/></svg>
        </div>
        <label class="filterbox d-flex align-items-center ps-1"><svg width="13" height="13"><use href="#funnel"/></svg><input class="flex-fill" aria-label="Filter"></label>
        <ul class="tree overflow-hidden">
          <li class="root"><svg class="ic"><use href="#part"/></svg>carter&nbsp; (Default&lt;&lt;Default&gt;_Display</li>
          <li><svg class="ic"><use href="#f1"/></svg>Sensors</li>
          <li><button class="xp plus" aria-label="Expand"></button><svg class="ic"><use href="#f2"/></svg>Annotations</li>
          <li><svg class="ic"><use href="#f3"/></svg>Surface Bodies</li>
          <li><button class="xp plus" aria-label="Expand"></button><svg class="ic"><use href="#f4"/></svg>Solid Bodies(1)</li>
          <li><svg class="ic"><use href="#f5"/></svg>Equations</li>
          <li><svg class="ic"><use href="#mat"/></svg>Material &lt;not specified&gt;</li>
          <li><svg class="ic"><use href="#plane"/></svg>Front Plane</li>
          <li><svg class="ic"><use href="#plane"/></svg>Top Plane</li>
          <li><svg class="ic"><use href="#plane"/></svg>Right Plane</li>
          <li><svg class="ic"><use href="#orig"/></svg>Origin</li>
          <li><button class="xp plus" aria-label="Expand"></button><svg class="ic"><use href="#boss"/></svg>Boss-Extrude1</li>
          <li><button class="xp plus" aria-label="Expand"></button><svg class="ic"><use href="#boss"/></svg>Boss-Extrude2</li>
          <li><button class="xp" aria-label="Collapse"></button><svg class="ic"><use href="#cut"/></svg>Cut-Extrude1</li>
          <li class="kid"><b></b><svg class="ic"><use href="#skb"/></svg>Sketch3</li>
          <li><button class="xp plus" aria-label="Expand"></button><svg class="ic"><use href="#boss"/></svg>Extrude-Thin1</li>
          <li><button class="xp plus" aria-label="Expand"></button><svg class="ic"><use href="#cut"/></svg>Cut-Extrude3</li>
          <li class="ghosted"><button class="xp" aria-label="Collapse"></button><svg class="ic"><use href="#ghost"/></svg>Boss-Extrude4</li>
          <li class="kid end"><b></b><svg class="ic"><use href="#sk"/></svg>Sketch9</li>
        </ul>
        <div class="hscroll d-flex mt-auto"><button class="btn t bev" aria-label="Scroll left"><svg width="5" height="8"><path d="M5 0v8L0 4z"/></svg></button><div class="bev thumb"></div><button class="btn t bev ms-auto" aria-label="Scroll right"><svg width="5" height="8"><path d="M0 0v8l5-4z"/></svg></button></div>
        <div class="sidefoot"></div>
      </aside>
      <div class="cmdtabs d-flex position-absolute top-0 start-0">
        <a href="#" style="width:66px">Features</a><a href="#" class="cur" style="width:54px">Sketch</a><a href="#" style="width:65px">Evaluate</a><a href="#" style="width:67px">DimXpert</a><a href="#" style="width:97px">Office Products</a>
      </div>
      <section class="view flex-fill">
        <svg class="model" viewBox="0 0 1338 990" preserveAspectRatio="xMinYMin slice">
          <path d="M0 346H870L1020 495V991H0z" fill="#848799"/>
          <path d="M0 346H870L857 356H0z" fill="#9093a9"/>
          <path d="M870 346L1020 495l-15 10L857 356z" fill="#717482"/>
          <path d="M975 451l-14 10 44 44 15-10z" fill="#5c5f6b"/>
          <path d="M996 495h24l-15 10z" fill="#8f93a6"/>
          <path d="M1005 505l15-10V991h-15z" fill="#4f515c"/>
          <path d="M0 346H870L1020 495V991M0 356H857M870 346l-13 10M975 451l-14 10M996 495h24l-15 10V991M0 505H1005" fill="none" stroke="#15161b"/>
          <path d="M751 357l148 148M899 510v116M900 612h35M967 612h36" fill="none" stroke="#000" stroke-width="1.200"/>
          <path d="M751 357h106l148 148H899" fill="none" stroke="#000" stroke-width="1.800"/>
          <path d="M900 612l15-3v6zM1004 612l-15-3v6z"/>
          <g><circle cx="751" cy="357" r="2.500"/><circle cx="857" cy="357" r="2.500"/><circle cx="899" cy="505" r="2.500"/><circle cx="1005" cy="505" r="2.500"/></g>
          <text x="951" y="618" text-anchor="middle" font-family="Liberation Sans" font-weight="bold" font-size="16">10</text>
          <path d="M40 932v-24" stroke="#0a6a1a" stroke-width="3"/><path d="M40 901l-4 11h8z" fill="#063"/>
          <path d="M42 932h20" stroke="#1414c8" stroke-width="3"/><path d="M72 932l-11-4v8z" fill="#1010a0"/>
          <path d="M37 928h7v7h-7z" fill="#fff"/><path d="M38 929l5 5M43 929l-5 5" stroke="#c22"/>
          <text x="40" y="899" text-anchor="middle" font-family="Liberation Sans" font-size="10" fill="#0a6a1a">Y</text>
          <text x="70" y="936" font-family="Liberation Sans" font-size="10" fill="#1414c8">Z</text>
        </svg>
        <button class="btn t grab" aria-label="Collapse panel"><svg width="6" height="24"><path d="M5 2v6L2 5zM5 9v6l-3-3zM5 16v6l-3-3z" fill="#556"/></svg></button>
        <div class="heads d-flex justify-content-center">
          <button class="btn t w23" aria-label="Zoom to fit"><svg class="ic"><use href="#zoomf"/></svg></button><button class="btn t w23" aria-label="Zoom to area"><svg class="ic"><use href="#zooma"/></svg></button><button class="btn t w23" aria-label="Previous view"><svg class="ic"><use href="#prev"/></svg></button><button class="btn t w23" aria-label="Section view"><svg class="ic"><use href="#sect"/></svg></button><button class="btn t w23" aria-label="View orientation"><svg class="ic"><use href="#co"/></svg></button><button class="btn t cw" aria-label="Orientation options"><i class="cr"></i></button><button class="btn t w23" aria-label="Display style"><svg class="ic"><use href="#c10"/></svg></button><button class="btn t cw" aria-label="Style options"><i class="cr"></i></button><button class="btn t w23" aria-label="Hide items"><svg class="ic"><use href="#glas"/></svg></button><button class="btn t cw" aria-label="Hide options"><i class="cr"></i></button><button class="btn t w23" aria-label="Edit appearance"><svg class="ic"><use href="#grey"/></svg></button><button class="btn t w23" aria-label="Apply scene"><svg class="ic"><use href="#scene"/></svg></button><button class="btn t cw" aria-label="Scene options"><i class="cr"></i></button><button class="btn t w23" aria-label="View settings"><svg class="ic"><use href="#mon"/></svg></button><button class="btn t cw" aria-label="Settings options"><i class="cr"></i></button>
        </div>
        <div class="winbtns d-flex"><button class="btn t w23" aria-label="Minimize document"><svg class="ic"><use href="#win-"/></svg></button><button class="btn t w23" aria-label="Restore document"><svg class="ic"><use href="#winr"/></svg></button><button class="btn t w23" aria-label="Close document"><svg class="ic"><use href="#winx"/></svg></button></div>
        <svg class="confirm" width="66" height="62" viewBox="0 0 66 62"><path d="M17 4H3v15c0 4 3 7 7 7h10" fill="none" stroke="#5560d8" stroke-width="2"/><path d="M5 19l3-6 14-6 3 3-14 7z" fill="#e6c050" stroke="#555"/><path d="M28 18c8 3 6 14-2 15v6l-9-8 9-8v5c3-1 4-5 2-10z" fill="#9a6ac0" stroke="#7a4aa0"/><path d="M44 40l20 20M64 40L44 60" stroke="#d03030" stroke-width="4"/></svg>
        <div class="panes d-flex flex-column"><button class="btn t" aria-label="Resources"><svg class="ic"><use href="#home"/></svg></button><button class="btn t" aria-label="Design library"><svg class="ic"><use href="#books"/></svg></button><button class="btn t" aria-label="File explorer"><svg class="ic"><use href="#fopen"/></svg></button><button class="btn t" aria-label="View palette"><svg class="ic"><use href="#pal"/></svg></button><button class="btn t cur" aria-label="Appearances"><svg class="ic"><use href="#ball"/></svg></button><button class="btn t" aria-label="Custom properties"><svg class="ic"><use href="#props"/></svg></button></div>
      </section>
    </div>
    <div class="sheets d-flex">
      <span class="nvs d-flex"><button class="btn t nv" aria-label="First"><svg width="8" height="8"><path d="M1 0v8M8 0v8L3 4z" fill="#82859d" stroke="#82859d"/></svg></button><button class="btn t nv" aria-label="Previous"><svg width="8" height="8"><path d="M6 0v8L1 4z" fill="#82859d"/></svg></button><button class="btn t nv" aria-label="Next"><svg width="8" height="8"><path d="M2 0v8l5-4z" fill="#82859d"/></svg></button><button class="btn t nv" aria-label="Last"><svg width="8" height="8"><path d="M7 0v8M0 0v8l5-4z" fill="#82859d" stroke="#82859d"/></svg></button></span>
      <button class="btn fw-bold first">Model</button><button class="btn second">Motion Study 1</button>
    </div>
  </div>
  <div class="dock d-flex align-items-start">
    <div class="vbar thin">
      <div class="vr2 off"><button class="btn t" aria-label="Fit spline"><svg class="ic"><use href="#v1"/></svg></button></div>
      <div class="vr2 off"><button class="btn t" aria-label="Tangent"><svg class="ic"><use href="#v2"/></svg></button></div>
      <div class="vr2 off"><button class="btn t" aria-label="Curve handle"><svg class="ic"><use href="#v3"/></svg></button></div>
      <div class="vr2 off"><button class="btn t" aria-label="Simplify"><svg class="ic"><use href="#v4"/></svg></button></div>
      <div class="vr2"><button class="btn t" aria-label="Fit"><svg class="ic"><use href="#v5"/></svg></button></div>
      <div class="hr2"></div>
      <div class="vr2 off"><button class="btn t" aria-label="Add tangency"><svg class="ic"><use href="#v2"/></svg></button></div>
      <div class="vr2 off"><button class="btn t" aria-label="Curvature"><svg class="ic"><use href="#v6"/></svg></button></div>
      <div class="vr2 off"><button class="btn t" aria-label="Minimum radius"><svg class="ic"><use href="#v7"/></svg></button></div>
      <div class="vr2 off"><button class="btn t" aria-label="Curvature combs"><svg class="ic"><use href="#v8"/></svg></button></div>
    </div>
    <div class="vbar wide">
      <div class="vr2 off"><button class="btn t" aria-label="3D plane"><svg class="ic"><use href="#conv"/></svg></button></div>
      <div class="vr2"><button class="btn t" aria-label="Dimension"><svg class="ic"><use href="#dim"/></svg></button><button class="btn t cw" aria-label="Dimension options"><i class="cr"></i></button></div>
      <div class="hr2"></div>
      <div class="vr2"><button class="btn t" aria-label="Line"><svg class="ic"><use href="#line"/></svg></button><button class="btn t cw" aria-label="Options"><i class="cr"></i></button></div>
      <div class="vr2"><button class="btn t" aria-label="Rectangle"><svg class="ic"><use href="#rectc"/></svg></button><button class="btn t cw" aria-label="Options"><i class="cr"></i></button></div>
      <div class="vr2"><button class="btn t" aria-label="Slot"><svg class="ic"><use href="#slot"/></svg></button><button class="btn t cw" aria-label="Options"><i class="cr"></i></button></div>
      <div class="vr2"><button class="btn t" aria-label="Circle"><svg class="ic"><use href="#circ"/></svg></button><button class="btn t cw" aria-label="Options"><i class="cr"></i></button></div>
      <div class="vr2"><button class="btn t" aria-label="Arc"><svg class="ic"><use href="#arc"/></svg></button><button class="btn t cw" aria-label="Options"><i class="cr"></i></button></div>
      <div class="vr2"><button class="btn t" aria-label="Spline"><svg class="ic"><use href="#spl"/></svg></button><button class="btn t cw" aria-label="Options"><i class="cr"></i></button></div>
      <div class="vr2"><button class="btn t" aria-label="Ellipse"><svg class="ic"><use href="#ell"/></svg></button><button class="btn t cw" aria-label="Options"><i class="cr"></i></button></div>
      <div class="vr2"><button class="btn t" aria-label="Fillet"><svg class="ic"><use href="#fil"/></svg></button><button class="btn t cw" aria-label="Options"><i class="cr"></i></button></div>
      <div class="vr2"><button class="btn t" aria-label="Point"><svg class="ic"><use href="#pt"/></svg></button></div>
      <div class="vr2"><button class="btn t" aria-label="Plane"><svg class="ic"><use href="#pl3"/></svg></button></div>
      <div class="hr2"></div>
      <div class="vr2"><button class="btn t" aria-label="Relations"><svg class="ic"><use href="#rel"/></svg></button><button class="btn t cw" aria-label="Options"><i class="cr"></i></button></div>
      <div class="vr2 off"><button class="btn t" aria-label="Snaps"><svg class="ic"><use href="#snap"/></svg></button><button class="btn t cw" aria-label="Options"><i class="cr dim"></i></button></div>
      <div class="hr2"></div>
      <div class="vr2"><button class="btn t" aria-label="Convert"><svg class="ic"><use href="#conv"/></svg></button><button class="btn t cw" aria-label="Options"><i class="cr"></i></button></div>
      <div class="vr2"><button class="btn t" aria-label="Offset"><svg class="ic"><use href="#offs"/></svg></button></div>
      <div class="vr2"><button class="btn t" aria-label="Trim"><svg class="ic"><use href="#trim"/></svg></button><button class="btn t cw" aria-label="Options"><i class="cr"></i></button></div>
      <div class="vr2"><button class="btn t" aria-label="Pattern"><svg class="ic"><use href="#pat"/></svg></button><button class="btn t cw" aria-label="Options"><i class="cr"></i></button></div>
      <div class="vr2"><button class="btn t" aria-label="Move"><svg class="ic"><use href="#move"/></svg></button><button class="btn t cw" aria-label="Options"><i class="cr"></i></button></div>
      <div class="hr2"></div>
      <div class="vr2"><button class="btn t" aria-label="Make block"><svg class="ic"><use href="#b1"/></svg></button></div>
      <div class="vr2 off"><button class="btn t" aria-label="Edit block"><svg class="ic"><use href="#b2"/></svg></button></div>
      <div class="vr2"><button class="btn t" aria-label="Insert block"><svg class="ic"><use href="#b3"/></svg></button></div>
      <div class="vr2 off"><button class="btn t" aria-label="Add to block"><svg class="ic"><use href="#b4"/></svg></button></div>
      <div class="vr2"><button class="btn t" aria-label="Save block"><svg class="ic"><use href="#b5"/></svg></button></div>
      <div class="vr2 off"><button class="btn t" aria-label="Explode block"><svg class="ic"><use href="#b6"/></svg></button></div>
      <div class="hr2"></div>
      <div class="vr2 off"><button class="btn t" aria-label="New part"><svg class="ic"><use href="#cube"/></svg></button></div>
      <div class="vr2 off"><button class="btn t" aria-label="Insert component"><svg class="ic"><use href="#b3"/></svg></button><button class="btn t cw" aria-label="Options"><i class="cr dim"></i></button></div>
      <div class="vr2 off"><button class="btn t" aria-label="Mate"><svg class="ic"><use href="#clip"/></svg></button></div>
      <div class="vr2 off"><button class="btn t" aria-label="Smart component"><svg class="ic"><use href="#hook"/></svg></button></div>
      <div class="vr2 off"><button class="btn t" aria-label="Rotate component"><svg class="ic"><use href="#gears"/></svg></button></div>
    </div>
  </div>
</main>

<div class="hbar d-flex align-items-center flex-shrink-0">
  <span class="dots mx-1"></span>
  <div class="d-flex off"><button class="btn t w23" aria-label="Plane"><svg class="ic"><use href="#per"/></svg></button><button class="btn t w23" aria-label="Axis"><svg class="ic"><use href="#axis"/></svg></button><button class="btn t w23" aria-label="Coordinate system"><svg class="ic"><use href="#csys"/></svg></button><button class="btn t w23" aria-label="Point"><svg class="ic"><use href="#ast"/></svg></button></div>
  <button class="btn t w23" aria-label="Mate reference"><svg class="ic"><use href="#mate"/></svg></button>
  <span class="s1 align-self-stretch ms-2 me-1"></span><span class="dots me-1"></span>
  <div class="d-flex off"><button class="btn t w23" aria-label="3D sketch"><svg class="ic"><use href="#td"/></svg></button><button class="btn t w23" aria-label="Weldment"><svg class="ic"><use href="#corner"/></svg></button><button class="btn t w23" aria-label="Structural member"><svg class="ic"><use href="#cube"/></svg></button><button class="btn t w23" aria-label="Trim"><svg class="ic"><use href="#xt"/></svg></button><button class="btn t w23" aria-label="Extrude"><svg class="ic"><use href="#boss"/></svg></button><button class="btn t w23" aria-label="End cap"><svg class="ic"><use href="#cube"/></svg></button><button class="btn t w23" aria-label="Chamfer"><svg class="ic"><use href="#chm"/></svg></button><button class="btn t w23" aria-label="Gusset"><svg class="ic"><use href="#corner"/></svg></button><button class="btn t w23" aria-label="Cut"><svg class="ic"><use href="#cut"/></svg></button><button class="btn t w23" aria-label="Hole wizard"><svg class="ic"><use href="#b2"/></svg></button><button class="btn t w23" aria-label="Bead"><svg class="ic"><use href="#chm"/></svg></button></div>
  <button class="btn t w23" aria-label="Reference geometry"><svg class="ic"><use href="#diam"/></svg></button><button class="btn t w18" aria-label="Geometry options"><i class="cr"></i></button>
  <span class="s1 align-self-stretch mx-1"></span><span class="dots me-1"></span>
  <button class="btn t w23" aria-label="Normal to"><svg class="ic"><use href="#norm"/></svg></button>
  <span class="s1 short"></span>
  <button class="btn t w23" aria-label="Front"><svg class="ic"><use href="#c1"/></svg></button><button class="btn t w23" aria-label="Back"><svg class="ic"><use href="#c2"/></svg></button><button class="btn t w23" aria-label="Left"><svg class="ic"><use href="#c3"/></svg></button><button class="btn t w23" aria-label="Right"><svg class="ic"><use href="#c4"/></svg></button><button class="btn t w23" aria-label="Top"><svg class="ic"><use href="#c5"/></svg></button><button class="btn t w23" aria-label="Bottom"><svg class="ic"><use href="#c6"/></svg></button><button class="btn t w23" aria-label="Isometric"><svg class="ic"><use href="#c7"/></svg></button><button class="btn t w23" aria-label="Trimetric"><svg class="ic"><use href="#c8"/></svg></button><button class="btn t w23" aria-label="Dimetric"><svg class="ic"><use href="#c9"/></svg></button>
  <span class="s1 short"></span>
  <button class="btn t w23" aria-label="View orientation"><svg class="ic"><use href="#scope"/></svg></button>
  <span class="s1 align-self-stretch ms-2"></span>
</div>

<footer class="status d-flex align-items-center flex-shrink-0">
  <span class="flex-fill">SolidWorks Premium 2011</span>
  <span class="bl align-self-stretch" style="width:4px"></span>
  <span style="width:78px;padding-left:6px">293.95mm</span><span style="width:64px">101.95mm</span><span style="width:42px">0mm</span>
  <div class="bl d-flex align-items-center align-self-stretch gap-1 ps-1">
    <span class="cell" style="width:71px">Fully Defined</span><span class="cell"></span><span class="cell" style="width:82px">Editing Sketch9</span><span class="cell"></span><span class="cell"></span>
  </div>
  <div class="stripes d-flex align-items-center align-self-stretch justify-content-between">
    <svg width="14" height="14"><rect x=".5" y=".5" width="13" height="13" fill="#e8f4f8" stroke="#357"/><text x="7" y="12" text-anchor="middle" font-family="Liberation Sans" font-weight="bold" font-size="13" fill="#090">?</text></svg>
    <svg width="16" height="16"><path d="M1 10l6-8c4-2 8 0 8 3l-6 9c-4 2-8 0-8-4z" fill="#ffc81e" stroke="#8a5a00"/><path d="M5 10l4-6M8 11l4-5" stroke="#a56a00"/></svg>
  </div>
</footer>

<div class="task d-flex align-items-center flex-shrink-0">
  <button class="btn t raised start fw-bold"><svg width="16" height="14" viewBox="0 0 15 14"><path d="M2 2c2-1 3-1 5 0L6 6C4 5 3 5 1 6z" fill="#e8502a"/><path d="M8 2c2 1 4 1 6 0l-1 4c-2 1-4 1-6 0z" fill="#6db33f"/><path d="M1 7c2-1 3-1 5 0l-1 4c-2-1-3-1-5 0z" fill="#3a7ad8"/><path d="M7 7c2 1 4 1 6 0l-1 4c-2 1-4 1-6 0z" fill="#f6c12c"/></svg>Start</button>
  <button class="btn t la" aria-label="Explorer"><svg class="big32" viewBox="0 0 32 32"><path d="M2 4h10l2 3h14v22H2z" fill="#f0d27a" stroke="#b8923a"/><path d="M6 2h20v6H6z" fill="#fff" stroke="#aaa"/><path d="M5 3h4" stroke="#3a3" stroke-width="2"/><path d="M14 4h4" stroke="#d33" stroke-width="2"/><path d="M1 8h30v21H1z" fill="#fae69a" stroke="#c8a850"/><path d="M6 31v-9h21v9h-4v-5H10v5z" fill="#7cc0ea" stroke="#3a86c0"/></svg></button>
  <button class="btn t la" aria-label="Media player"><svg class="big32" viewBox="0 0 32 32"><path d="M10 4h16v24H10z" fill="#7fb6dc" stroke="#4682b4"/><path d="M3 5h20v23H3z" fill="#a6d0ee" stroke="#5a93bd"/><circle cx="13" cy="16" r="8.500" fill="#f57c14" stroke="#fff"/><path d="M10 11l8 5-8 5z" fill="#fff"/></svg></button>
  <button class="btn t la" aria-label="Virtual box"><svg class="big32" viewBox="0 0 32 32"><path d="M16 1l15 7v14l-15 9L1 23V8z" fill="#1d8fb0"/><path d="M16 1l15 7-15 8L1 8z" fill="#4fc4dc"/><path d="M16 16l15-8v14l-15 9z" fill="#10708e"/><use href="#shield" x="19" y="17" width="12" height="14"/></svg></button>
  <button class="btn t la" aria-label="Internet Explorer"><svg class="big32" viewBox="0 0 32 32"><path d="M29 18H12c0 8 9 9 12 4h5c-4 12-22 11-23-4C6 3 29 2 29 18zM12 14h11c-1-6-10-6-11 0z" fill="#2f9fe6" stroke="#1a7cc4" stroke-width=".6" fill-rule="evenodd"/><path d="M4 30C-5 26 10 0 30 2c2 1 1 4 0 6-1-6-9-4-17 4S3 27 4 30z" fill="#f6bd22"/></svg></button>
  <button class="btn t la" aria-label="X4"><svg class="big32" viewBox="0 0 32 32"><path d="M6 1h7l5 10 5-10h6L21 16l9 15h-8l-6-10-6 10H4l9-15z" fill="#dd1c1c"/><ellipse cx="15" cy="14" rx="9" ry="5" transform="rotate(35 15 14)" fill="#e8a828" stroke="#222"/><path d="M10 10h2M14 13h2M18 16h2M12 14h2M16 11h2M0 12l7-2M1 17l8-2" stroke="#222" stroke-width="1.600"/><text x="26" y="18" font-family="Liberation Sans" font-weight="bold" font-size="10" fill="#25e">4</text></svg></button>
  <button class="btn t la" aria-label="Tools"><svg class="big32" viewBox="0 0 32 32"><path d="M5 12c4-8 10-6 12 0v16H2z" fill="#8fc0e0" stroke="#567"/><path d="M18 10l10 3v16H14z" fill="#7bb070" stroke="#575"/><path d="M3 1l16 17" stroke="#888" stroke-width="2"/><path d="M27 3L6 27" stroke="#ccc" stroke-width="5"/><path d="M15 17L4 28" stroke="#2050c0" stroke-width="5"/><path d="M17 17l7 8" stroke="#d33" stroke-width="4"/><use href="#shield" x="19" y="17" width="12" height="14"/></svg></button>
  <button class="btn t sunk ms-2" aria-label="SolidWorks"><svg class="big32"><use href="#sw"/></svg></button>
  <button class="btn t raised ms-1"><span class="gc">G<span class="text-danger">C</span></span></button>
  <div class="tray ms-auto d-flex align-items-center ps-1">
    <svg width="8" height="12"><path d="M1 5l3-3 3 3M1 10l3-3 3 3" fill="none" stroke="#000" stroke-width="1.500"/></svg>
    <svg class="ms-2" width="18" height="18"><path d="M2 1v16" stroke="#666" stroke-width="2"/><path d="M3 2c4-2 5 3 13 1l-3 6c-5 1-6-2-10 0z" fill="#fff" stroke="#666"/></svg>
    <svg class="ms-2" width="16" height="18"><path d="M4.500 4.500h11v9h-11z" fill="#999" stroke="#555"/><path d="M6 16h9" stroke="#555" stroke-width="2"/><path d="M1 2h5v5H1zM3.500 7v9" fill="#fff" stroke="#555" stroke-width="1.300"/></svg>
    <svg class="ms-2" width="17" height="16"><path d="M1 5h3l4-4v14l-4-4H1z" fill="#fff" stroke="#666"/><path d="M10 5c2 2 2 4 0 6M12 3c3 3 3 7 0 10M14 1c4 4 4 10 0 14" fill="none" stroke="#777"/></svg>
    <div class="text-center ms-auto clock">1:27 PM<br>11/10/2012</div>
    <svg class="me-1" width="15" height="13"><rect width="15" height="10" fill="#2b6ad0"/><path d="M0 10h15v2H0z" fill="#222"/><path d="M0 0h15L0 8z" fill="#5a9af0"/></svg>
  </div>
</div>
</body>
</html>
